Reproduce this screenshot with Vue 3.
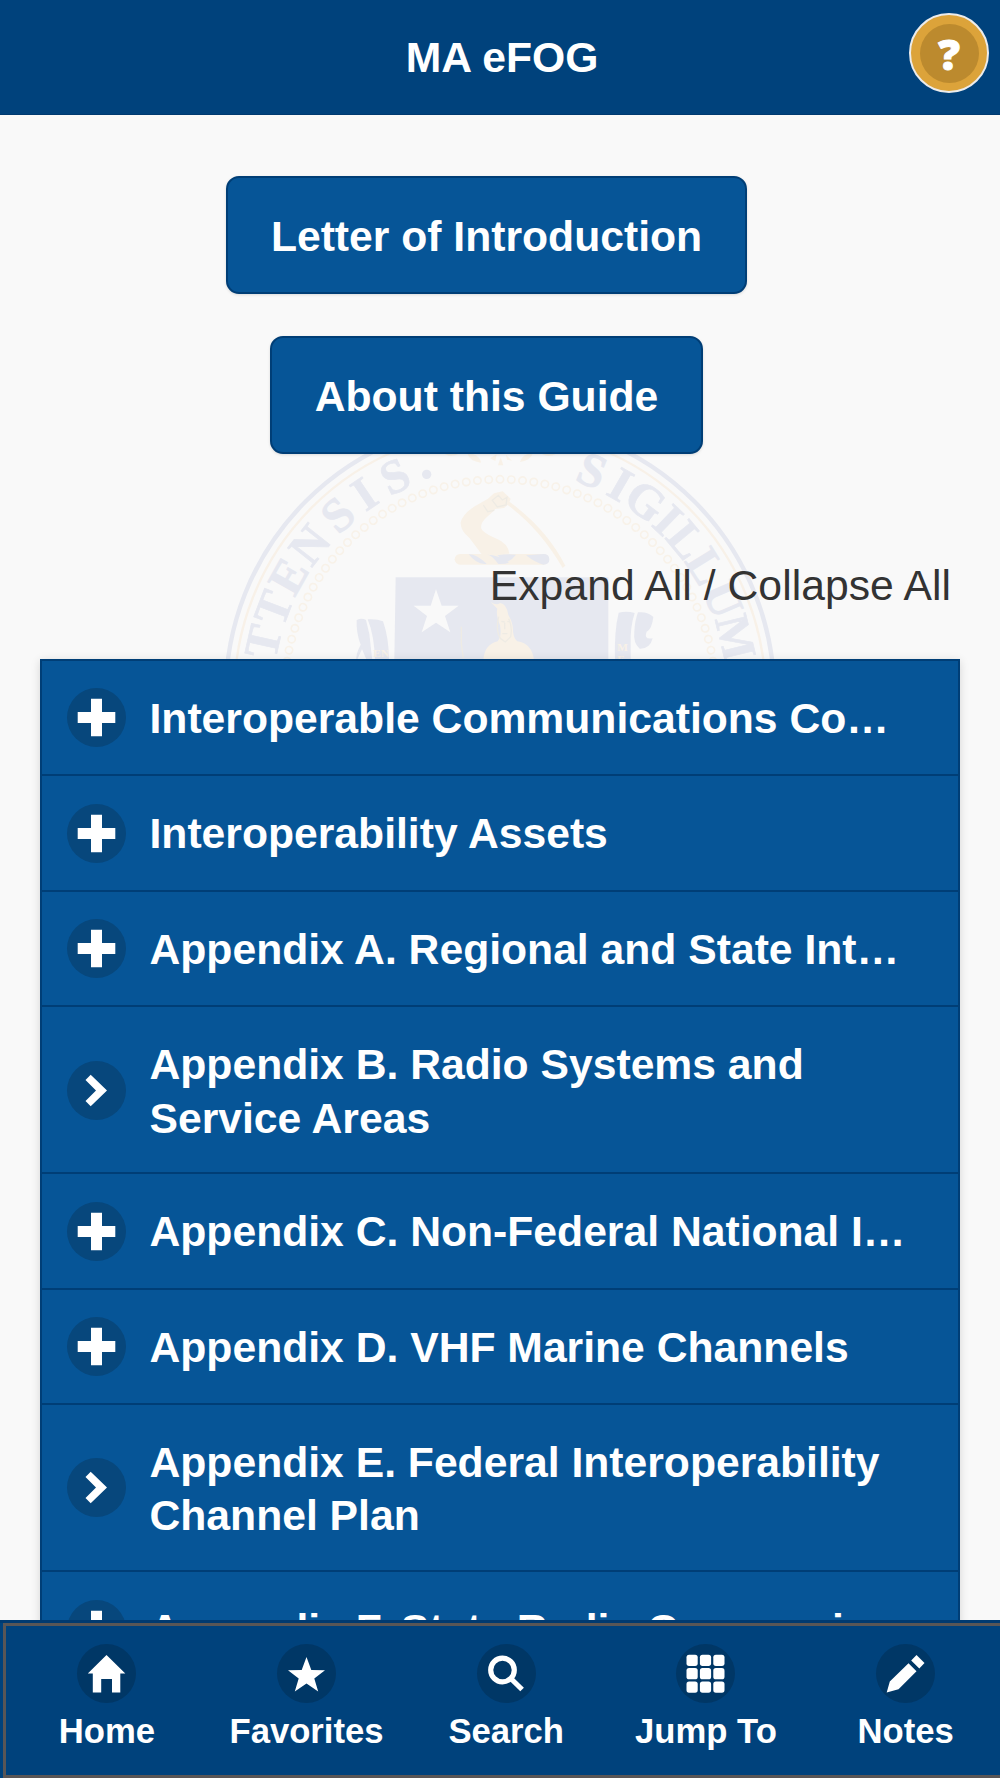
<template>
  <div class="page">
    <header class="header">
      <h1>MA eFOG</h1>
      <button class="help" aria-label="Help"><span>?</span></button>
    </header>

    <!-- faded state seal behind the content -->
    <svg class="seal" viewBox="0 0 1200 660" aria-hidden="true">
      <g fill="none">
        <circle cx="900" cy="765" r="823" stroke="#e6e8f0" stroke-width="13" />
        <circle cx="900" cy="765" r="797" stroke="#f8f1e8" stroke-width="7" />
        <circle
          v-for="n in 120"
          :key="n"
          cx="900"
          cy="118"
          r="11"
          stroke="#f8f2e9"
          stroke-width="5"
          :transform="`rotate(${n * 3} 900 765)`"
        />
      </g>
      <g class="motto">
        <text
          v-for="(l, i) in motto"
          :key="i"
          x="900"
          y="85"
          :transform="`rotate(${l.angle} 900 765)`"
        >{{ l.char }}</text>
      </g>
      <circle cx="680" cy="103" r="14" fill="#e6e8f0" />

      <g class="gold">
        <path d="M735 42q18 12 45-2zM803 42q6 22 40 26q-2-18-24-26zM870 55l20-12-4 20zM902 52l8 24-16 0zM918 44l18 18-15-3zM960 66q5-24 38-26q-4 20-38 26zM1025 42q22 12 42 0z" />
        <path d="M882 160l26-6 24 22-6 16-14 12-26 3-14 14q-20 16-26 28q-6 14 1 22q14 14 43 25q35 14 38 45l-82 3q-19-25-37-49q-29-24-27-48q6-24 40-47l42-24z" />
        <path d="M926 184q112 80 170 193l-8 7q-70-120-168-191z" />
      </g>
      <path class="detail" d="M850 195l13 20 20-4m-6-30l18-15 12 14 14-8-3 23-26 6z" />
      <rect class="gold" x="764" y="342" width="282" height="32" rx="16" />
      <g class="navy">
        <path d="M806 343q20-2 54 28q-28 5-54-28zM895 372q-20-28-34-28q35 0 66 24q-12 5-32 4zM892 346q30-6 56-2q-20 26-46 26q5-14-10-24zM978 346q28 22 52 28q18 0 18-16q0-16-18-16z" />
        <path d="M587 412h638v250H583z" />
        <path d="M470 540q16-8 28 0l10 42 9 80h-16l-15-34-16 34q-5-16 12-48q-14-36-12-74zM503 538q28-2 46 6q18 50 18 118h-42q-2-76-22-124z" />
        <path d="M1256 518q24-6 48 1q-14 42-12 96v47h-47q-3-88 11-144zM1314 517q30-3 46 14q-4 36-20 44q-10 24 18 20q-8 32-39 31q-20-16-16-52q2-34 11-57z" />
      </g>
      <polygon class="star" points="708,448 725,497 776,497 735,528 751,577 708,548 665,577 681,528 641,497 692,497" />
      <g class="gold">
        <path d="M872 486q18 12 28 3q20 2 25 36q15 24 14 51q3 20 13 28q45 7 50 58H850q2-48 43-58q13-14 7-48q-13-33-8-50z" />
        <text class="ribbon" x="520" y="650">EN</text>
        <text class="ribbon" x="1252" y="632">M</text>
        <text class="ribbon" x="1252" y="668">E</text>
      </g>
      <path class="detail" d="M896 530q-10 44 6 66l14 10 16-16q6-30-6-54M904 544l10 2m8-1l9-1m-17 4v20m-7 13h15M784 560v52l6 42" />
    </svg>

    <main>
      <nav class="buttons">
        <button>Letter of Introduction</button>
        <button>About this Guide</button>
      </nav>

      <p class="toggle-all">Expand All / Collapse All</p>

      <ul class="list">
        <li v-for="item in sections" :key="item.title" :class="{ double: item.link }">
          <span class="disc">
            <svg viewBox="-29.5 -29.5 59 59">
              <path v-if="item.link" d="M-5.8-15.8 10.5 0-5.8 15.8-11 10.5-.5 0-11-10.5z" />
              <path v-else d="M-5.5-18.8h11v13.3h13.3v11H5.5v13.3h-11V5.5h-13.3v-11h13.3z" />
            </svg>
          </span>
          <span class="title">{{ item.title }}</span>
        </li>
      </ul>
    </main>

    <footer class="footer">
      <nav>
        <a v-for="tab in tabs" :key="tab.label">
          <svg class="tab-icon" viewBox="-29.5 -29.5 59 59">
            <path v-if="tab.icon === 'home'" d="M0-18.5 18.8 0h-5v19h-8.3V5.5h-10.8V19h-8.4V0h-5z" />
            <polygon
              v-else-if="tab.icon === 'star'"
              points="0,-16.5 4.8,-3.5 18.5,-3.3 7.8,5 11.7,18 0,10 -11.7,18 -7.8,5 -18.5,-3.3 -4.8,-3.5"
            />
            <g v-else-if="tab.icon === 'search'" class="lens">
              <circle cx="-4" cy="-3.5" r="11.8" />
              <path d="M4.8 5.5 15.6 16" />
            </g>
            <g v-else-if="tab.icon === 'grid'">
              <rect
                v-for="n in 9"
                :key="n"
                :x="-19 + ((n - 1) % 3) * 13.4"
                :y="-18.8 + Math.floor((n - 1) / 3) * 13.4"
                width="11.2"
                height="11.2"
                rx="2.6"
              />
            </g>
            <path v-else d="M11-18.5 19-10.5 13.8-5 5.7-13zM3-10.3 11-2.3-7 15.8-18.8 19-15.7 8z" />
          </svg>
          <span>{{ tab.label }}</span>
        </a>
      </nav>
    </footer>
  </div>
</template>

<script setup>
const sections = [
  { title: 'Interoperable Communications Co…' },
  { title: 'Interoperability Assets' },
  { title: 'Appendix A. Regional and State Int…' },
  { title: 'Appendix B. Radio Systems and Service Areas', link: true },
  { title: 'Appendix C. Non-Federal National I…' },
  { title: 'Appendix D. VHF Marine Channels' },
  { title: 'Appendix E. Federal Interoperability Channel Plan', link: true },
  { title: 'Appendix F. State Radio Communic…' },
]

const tabs = [
  { label: 'Home', icon: 'home' },
  { label: 'Favorites', icon: 'star' },
  { label: 'Search', icon: 'search' },
  { label: 'Jump To', icon: 'grid' },
  { label: 'Notes', icon: 'pencil' },
]

// letters around the rim, degrees clockwise from the top
const motto = [
  ['T', -77.3], ['T', -69], ['E', -60.7], ['N', -51.7], ['S', -42], ['I', -34], ['S', -25.7],
  ['S', 22.3], ['I', 29.8], ['G', 36.9], ['I', 43.8], ['L', 50.3], ['L', 58], ['U', 66.8], ['M', 76.3],
].map(([char, angle]) => ({ char, angle }))
</script>

<style>
body {
  background: #f9f9f9;
}
</style>

<style scoped>
.page {
  position: relative;
  display: flex;
  flex-direction: column;
  height: 1778px;
  overflow: hidden;
  background: #f9f9f9;
  font-family: "Liberation Sans", Arial, sans-serif;
  font-size: 42.67px;
  line-height: 53.33px;
  color: #333;
}
.header {
  flex: none;
  position: relative;
  box-sizing: border-box;
  height: 115px;
  padding: 2px 0 0 4px;
  background: #00427c;
  border-bottom: 1px solid #003a70;
  color: #fff;
  display: flex;
  align-items: center;
  justify-content: center;
}
h1 {
  margin: 0;
  font-size: inherit;
  font-weight: bold;
}
.help {
  position: absolute;
  top: 13px;
  right: 11px;
  width: 80px;
  height: 80px;
  padding: 0;
  border: 2.5px solid #ececec;
  border-radius: 50%;
  background: #dca33a;
  display: flex;
  align-items: center;
  justify-content: center;
}
.help span {
  width: 59px;
  height: 59px;
  border-radius: 50%;
  background: #bc8a2e;
  color: #fff;
  font: 800 43px/59px "Open Sans", sans-serif;
  -webkit-text-stroke: 1px #fff;
}
.seal {
  position: absolute;
  left: 200px;
  top: 440px;
  width: 400px;
  height: 220px;
  overflow: visible;
}
.motto {
  fill: #e6e8f0;
  stroke: #e6e8f0;
  stroke-width: 2;
  font: bold 144px "Liberation Serif", serif;
  text-anchor: middle;
}
.gold {
  fill: #f8f1e7;
}
.navy {
  fill: #e6e8f0;
}
.star {
  fill: #f9f9f9;
}
.detail {
  fill: none;
  stroke: #eeebe4;
  stroke-width: 4;
}
.ribbon {
  font: bold 34px "Liberation Serif", serif;
}
main {
  flex: 1;
  min-height: 0;
  position: relative;
  overflow: hidden;
  display: flex;
  flex-direction: column;
}
.buttons {
  display: flex;
  flex-direction: column;
  align-items: center;
  gap: 42px;
  margin: 61px 27px 0 0;
}
.buttons button {
  box-sizing: border-box;
  height: 118px;
  padding: 3px 43px 0;
  border: 2.67px solid #003e76;
  border-radius: 13px;
  background: #065597;
  box-shadow: 0 1px 3px rgba(0, 0, 0, 0.12);
  color: #fff;
  font: bold 42.67px/53.33px "Liberation Sans", Arial, sans-serif;
}
.toggle-all {
  margin: 105px 49px 0;
  text-align: right;
  letter-spacing: 0.05px;
}
.list {
  flex: none;
  list-style: none;
  margin: 46.4px 40px 0;
  padding: 0;
  border: 2.67px solid #003e76;
  border-top: 0;
  background: #065597;
  box-shadow: 0 2px 9px rgba(0, 0, 0, 0.15);
}
.list li {
  box-sizing: border-box;
  height: 115.5px;
  border-top: 2.67px solid #003e76;
  display: flex;
  align-items: center;
  color: #fff;
  font-weight: bold;
}
.list li.double {
  height: 166.8px;
}
.disc {
  flex: none;
  width: 59px;
  height: 59px;
  margin: 1px 24px 0 24.5px;
  border-radius: 50%;
  background: #07477c;
}
.disc svg {
  display: block;
  fill: #fff;
}
.title {
  white-space: nowrap;
  padding-top: 2px;
}
.double .title {
  white-space: normal;
  max-width: 745px;
  padding-top: 4px;
}
.footer {
  flex: none;
  position: relative;
  box-sizing: border-box;
  height: 158px;
  padding-left: 3px;
  background: #00427c;
  border-top: 3px solid #003a70;
  color: #fff;
}
.footer nav {
  box-sizing: border-box;
  width: 1004px;
  height: 155px;
  border: 3px solid #595656;
  padding-left: 1px;
  display: grid;
  grid-template-columns: repeat(5, 199.7px);
}
.footer a {
  display: flex;
  flex-direction: column;
  align-items: center;
  padding-top: 18px;
  font-size: 34.67px;
  line-height: 43px;
  font-weight: bold;
}
.tab-icon {
  width: 59px;
  height: 59px;
  margin-bottom: 7px;
  border-radius: 50%;
  background: #003766;
  fill: #fff;
}
.lens {
  fill: none;
  stroke: #fff;
  stroke-width: 5.2;
}
</style>
